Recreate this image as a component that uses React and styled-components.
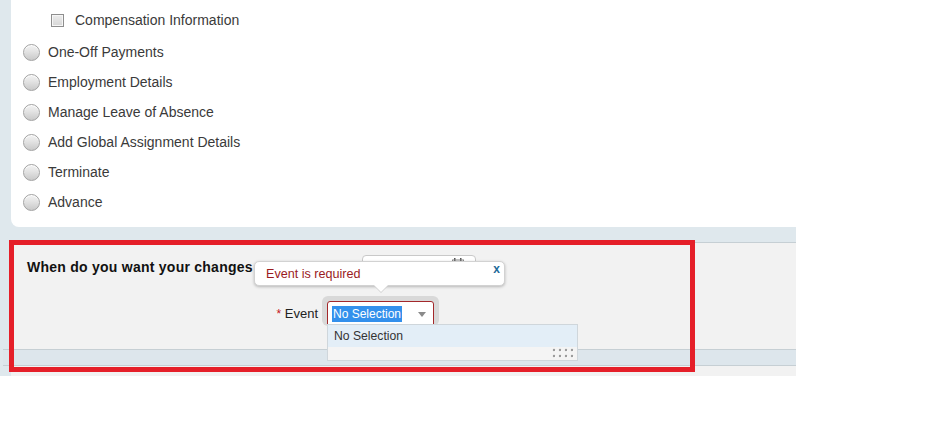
import styled, { createGlobalStyle } from 'styled-components';

const GlobalStyle = createGlobalStyle`
    html, body {
        margin: 0;
        padding: 0;
        background: #fff;
    }
    body {
        font-family: "Liberation Sans", Arial, sans-serif;
    }
`;

const Page = styled.div`
    position: relative;
    width: 796px;
    background: #dfe8ed;
    display: flex;
    flex-direction: column;
`;

const Card = styled.div`
    margin-left: 11px;
    height: 227px;
    box-sizing: border-box;
    padding: 5px 0 0 12px;
    background: #fff;
    border-bottom-left-radius: 8px;
    display: flex;
    flex-direction: column;
`;

const Row = styled.label`
    display: flex;
    align-items: center;
    gap: ${(props) => props.gap || 8}px;
    height: 30px;
    padding-left: ${(props) => props.indent || 0}px;
    margin-bottom: ${(props) => props.after || 0}px;
    font-size: 14px;
    color: #3a3a3a;
`;

const Radio = styled.span`
    display: inline-block;
    box-sizing: border-box;
    width: 17px;
    height: 17px;
    border-radius: 50%;
    border: 1px solid #a2a2a2;
    background: linear-gradient(to bottom, #f4f4f4 0%, #e2e2e2 45%, #c9c9c9 100%);
    box-shadow: inset 0 1px 0 #fff;
`;

const Checkbox = styled.span`
    display: inline-block;
    box-sizing: border-box;
    width: 13px;
    height: 13px;
    border: 1px solid #8e8e8e;
    background: linear-gradient(to bottom, #ececec, #d6d6d6);
    box-shadow: inset 0 0 0 1px #f6f6f6;
`;

const Band = styled.div`
    height: 15px;
`;

const Section = styled.div`
    margin-left: 11px;
    box-sizing: border-box;
    height: 107px;
    padding-top: 12px;
    background: #f2f2f2;
    border-top: 1px solid #c6cfd4;
    border-radius: 4px 0 0 4px;
    display: flex;
    flex-direction: column;
    gap: 17px;
`;

const HeadingRow = styled.div`
    display: flex;
    align-items: center;
    height: 24px;
    padding-left: 16px;
`;

const Heading = styled.div`
    width: 335px;
    white-space: nowrap;
    font-size: 14px;
    font-weight: bold;
    letter-spacing: 0.25px;
    color: #111;
`;

const DateInput = styled.div`
    position: relative;
    box-sizing: border-box;
    width: 114px;
    height: 24px;
    background: #fff;
    border: 1px solid #c9c9c9;
    border-radius: 4px;

    svg {
        position: absolute;
        right: 11px;
        top: 1px;
    }
`;

const FieldRow = styled.div`
    display: flex;
    align-items: flex-start;
    height: 30px;
`;

const FieldLabel = styled.div`
    width: 307px;
    padding-top: 6px;
    line-height: 24px;
    text-align: right;
    font-size: 13px;
    color: #222;
    margin-right: 4px;
`;

const Star = styled.span`
    color: #c4141c;
    font-size: 12px;
`;

const SelectWrap = styled.div`
    position: relative;
    box-sizing: border-box;
    width: 117px;
    height: 30px;
    padding: 5px 5px 0 5px;
    background: #d9d9d9;
    border-radius: 6px;
`;

const SelectBox = styled.div`
    box-sizing: border-box;
    display: flex;
    align-items: center;
    height: 25px;
    background: #fff;
    border: 1px solid #a3282b;
    border-radius: 3px 3px 0 0;
`;

const Selected = styled.span`
    margin-left: 4px;
    padding: 0 1px;
    height: 16px;
    line-height: 16px;
    font-size: 12px;
    color: #fff;
    background: #3390ec;
`;

const ArrowBtn = styled.span`
    margin-left: auto;
    width: 22px;
    height: 100%;
    display: flex;
    align-items: center;
    justify-content: center;

    &::after {
        content: '';
        border-left: 4px solid transparent;
        border-right: 4px solid transparent;
        border-top: 5px solid #8a8a8a;
        margin-top: 2px;
    }
`;

const Tooltip = styled.div`
    position: absolute;
    left: -68px;
    top: -35px;
    box-sizing: border-box;
    width: 251px;
    height: 25px;
    padding-left: 11px;
    display: flex;
    align-items: center;
    background: #fff;
    border: 1px solid #d2d2d2;
    border-radius: 5px;
    box-shadow: 0 1px 3px rgba(0, 0, 0, 0.25);
    font-size: 12.6px;
    color: #9a1b1e;
    z-index: 2;

    &::before,
    &::after {
        content: '';
        position: absolute;
        left: 119px;
        border-left: 7px solid transparent;
        border-right: 7px solid transparent;
    }
    &::before {
        top: 24px;
        border-top: 7px solid #cfcfcf;
    }
    &::after {
        top: 23px;
        border-top: 7px solid #fff;
    }
`;

const Close = styled.span`
    position: absolute;
    right: 4px;
    top: 0;
    font-size: 12px;
    font-weight: bold;
    color: #1f6a99;
`;

const DropList = styled.div`
    position: absolute;
    left: 5px;
    top: 28px;
    box-sizing: border-box;
    width: 251px;
    height: 37px;
    background: #f4f4f4;
    border: 1px solid #cfd6db;
    display: flex;
    flex-direction: column;
    z-index: 1;
`;

const Option = styled.div`
    height: 22px;
    line-height: 22px;
    padding-left: 6px;
    background: #e3eef7;
    font-size: 12.2px;
    color: #333;
`;

const Grip = styled.div`
    flex: 1;
    display: flex;
    justify-content: flex-end;
    align-items: center;
    padding-right: 2px;
`;

const BottomBand = styled.div`
    height: 15px;
    margin-left: 3px;
    border-top: 1px solid #c6cfd4;
    border-bottom: 1px solid #c6cfd4;
    background: #dde6ec;
`;

const Footer = styled.div`
    margin-left: 11px;
    height: 10px;
    background: #f2f2f2;
`;

const Highlight = styled.div`
    position: absolute;
    left: 9px;
    top: 240px;
    box-sizing: border-box;
    width: 686px;
    height: 132px;
    border: 5px solid #e51f29;
    pointer-events: none;
    z-index: 3;
`;

const options = [
    'One-Off Payments',
    'Employment Details',
    'Manage Leave of Absence',
    'Add Global Assignment Details',
    'Terminate',
    'Advance',
];

function GripDots() {
    const xs = [2, 8, 14, 20];
    return (
        <svg width="23" height="11" viewBox="0 0 23 11">
            {[2, 8].map((y) =>
                xs.map((x) => (
                    <g key={`${x}-${y}`}>
                        <circle cx={x + 0.6} cy={y + 0.6} r="1.2" fill="#fff" />
                        <circle cx={x} cy={y} r="1.2" fill="#9a9a9a" />
                    </g>
                ))
            )}
        </svg>
    );
}

function CalendarIcon() {
    return (
        <svg width="12" height="12" viewBox="0 0 12 12">
            <rect x="2" y="1" width="1.5" height="3" fill="#555" />
            <rect x="8" y="1" width="1.5" height="3" fill="#555" />
            <rect x="0.5" y="3" width="11" height="8.5" fill="none" stroke="#888" />
        </svg>
    );
}

export default function App() {
    return (
        <>
            <GlobalStyle />
            <Page>
                <Card>
                    <Row indent={28} gap={11} after={2}>
                        <Checkbox />
                        Compensation Information
                    </Row>
                    {options.map((name) => (
                        <Row key={name}>
                            <Radio />
                            {name}
                        </Row>
                    ))}
                </Card>
                <Band />
                <Section>
                    <HeadingRow>
                        <Heading>When do you want your changes</Heading>
                        <DateInput>
                            <CalendarIcon />
                        </DateInput>
                    </HeadingRow>
                    <FieldRow>
                        <FieldLabel>
                            <Star>*</Star> Event
                        </FieldLabel>
                        <SelectWrap>
                            <SelectBox>
                                <Selected>No Selection</Selected>
                                <ArrowBtn />
                            </SelectBox>
                            <Tooltip>
                                Event is required
                                <Close>x</Close>
                            </Tooltip>
                            <DropList>
                                <Option>No Selection</Option>
                                <Grip>
                                    <GripDots />
                                </Grip>
                            </DropList>
                        </SelectWrap>
                    </FieldRow>
                </Section>
                <BottomBand />
                <Footer />
                <Highlight />
            </Page>
        </>
    );
}
